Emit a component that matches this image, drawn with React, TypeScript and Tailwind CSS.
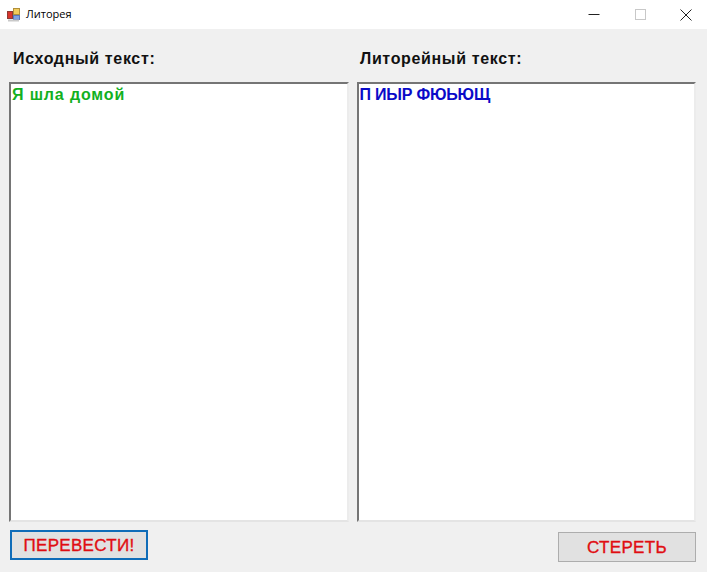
import React from 'react'

const AppIcon = () => (
  <svg width="13" height="14" viewBox="0 0 13 14" className="shrink-0">
    <rect x="6.5" y="0.5" width="6" height="6" fill="#f2cb5a" stroke="#b08f3a" />
    <rect x="0.5" y="3.5" width="5" height="7" fill="#d8342c" stroke="#8f3a34" />
    <rect x="6.5" y="7.5" width="6" height="4" fill="#7fa2e0" stroke="#5a78b8" />
    <rect x="1" y="11.5" width="11" height="2" fill="#c9c9c9" />
  </svg>
)

const CaptionIcons = () => (
  <div className="ml-auto flex items-center">
    <div className="w-[46px] flex justify-center mt-[-2px]">
      <svg width="12" height="12" viewBox="0 0 12 12"><path d="M0.5 6.5H11.5" stroke="#222" strokeWidth="1" /></svg>
    </div>
    <div className="w-[46px] flex justify-center">
      <svg width="11" height="11" viewBox="0 0 11 11"><rect x="0.5" y="0.5" width="10" height="10" fill="none" stroke="#c8c8c8" /></svg>
    </div>
    <div className="w-[46px] flex justify-center mr-[-2px]">
      <svg width="12" height="12" viewBox="0 0 12 12"><path d="M0.5 0.5L11.5 11.5M11.5 0.5L0.5 11.5" stroke="#222" strokeWidth="1" /></svg>
    </div>
  </div>
)

const TextPanel = ({ text, color }: { text: string; color: string }) => (
  <div className={`flex-1 h-[440px] bg-white border-2 border-t-[#757575] border-l-[#757575] border-r-[#ececec] border-b-[#e4e4e4] pl-[1px] pt-[1px] text-[16px] leading-[20px] font-bold ${color}`}>
    {text}
  </div>
)

const App: React.FC = () => {
  return (
    <div className="w-[707px] h-[572px] bg-[#f0f0f0] overflow-hidden flex flex-col font-['Liberation_Sans',Arial,sans-serif]">
      <div className="h-[29px] bg-white flex items-center">
        <div className="ml-[7px]"><AppIcon /></div>
        <span className="ml-[6px] text-[11px] text-black font-['Open_Sans',sans-serif]">Литорея</span>
        <CaptionIcons />
      </div>

      <div className="flex mt-[20px] h-[20px] items-center text-[16px] font-bold text-[#111] tracking-[0.65px]">
        <span className="ml-[13px] w-[347px]">Исходный текст:</span>
        <span>Литорейный текст:</span>
      </div>

      <div className="flex gap-[8px] ml-[9px] mr-[11px] mt-[13px]">
        <TextPanel text="Я шла домой" color="text-[#12b01e] tracking-[0.85px]" />
        <TextPanel text="П ИЫР ФЮЬЮЩ" color="text-[#0a0ac8] tracking-[-0.2px]" />
      </div>

      <div className="flex justify-between items-start ml-[10px] mr-[11px] mt-[8px]">
        <button className="w-[138px] h-[30px] bg-[#e1e1e1] border-2 border-[#0f6cb8] text-[#e00d12] text-[17px] tracking-[0.3px] [-webkit-text-stroke:0.35px_#e00d12] leading-none">ПЕРЕВЕСТИ!</button>
        <button className="w-[138px] h-[30px] mt-[2px] bg-[#e1e1e1] border border-[#adadad] text-[#e00d12] text-[17px] tracking-[0.3px] [-webkit-text-stroke:0.35px_#e00d12] leading-none">СТЕРЕТЬ</button>
      </div>
    </div>
  )
}

export default App
